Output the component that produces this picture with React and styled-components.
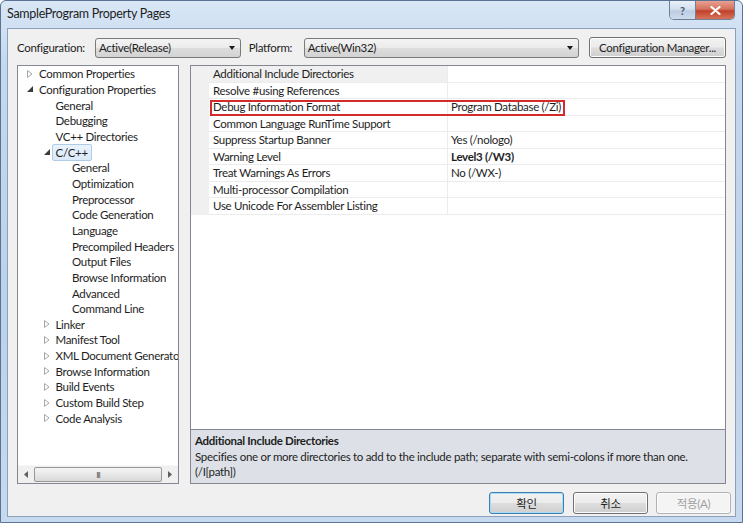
import styled, {createGlobalStyle} from "styled-components";

const GlobalStyle = createGlobalStyle`
  html, body {
    margin: 0;
    padding: 0;
    background: #ffffff;
  }
  body {
    font-family: Lato, "Noto Sans CJK KR", sans-serif;
    font-size: 11.5px;
    letter-spacing: -0.3px;
    color: #000000;
  }
`

const Window = styled.div`
  width: 743px;
  height: 523px;
  box-sizing: border-box;
  display: flex;
  flex-direction: column;
  border: 1px solid #5a7394;
  border-radius: 6px 6px 0 0;
  background: linear-gradient(180deg, #d9e7f6 0%, #c4d8ee 12%, #bcd2ea 60%, #c7d9ee 100%);
  overflow: hidden;
`

const TitleBar = styled.div`
  height: 27px;
  flex-shrink: 0;
  display: flex;
  align-items: flex-start;
  justify-content: space-between;
  padding: 0 7px 0 6px;
`

const Title = styled.div`
  padding-top: 5px;
  font-size: 12.5px;
  color: #1e1e1e;
`

const CaptionButtons = styled.div`
  display: flex;
  border: 1px solid #6f7f95;
  border-top: none;
  border-radius: 0 0 5px 5px;
  overflow: hidden;
  height: 18px;
`

const CaptionButton = styled.div`
  width: ${p => p.$w}px;
  display: flex;
  align-items: center;
  justify-content: center;
  background: ${p => p.$close
    ? "linear-gradient(180deg, #e8a192 0%, #d4715f 45%, #c2412a 55%, #d6735b 100%)"
    : "linear-gradient(180deg, #e9f0f8 0%, #d3e0ee 45%, #bccde2 55%, #cfdcec 100%)"};
  border-left: ${p => p.$close ? "1px solid #6f7f95" : "none"};
  color: ${p => p.$close ? "#ffffff" : "#4a5a70"};
  font-size: 11px;
  font-weight: bold;
`

const Client = styled.div`
  flex: 1;
  margin: 0 6px 5px 6px;
  border: 1px solid #8aa0bc;
  background: #f0f0f0;
  display: flex;
  flex-direction: column;
  padding: 8px 9px 0 9px;
  min-height: 0;
`

const TopRow = styled.div`
  display: flex;
  align-items: center;
  height: 21px;
`

const Label = styled.span`
  margin-left: ${p => p.$ml || 0}px;
  width: ${p => p.$w}px;
  flex-shrink: 0;
  color: #1e1e1e;
`

const Combo = styled.div`
  width: ${p => p.$w}px;
  height: 20px;
  box-sizing: border-box;
  border: 1px solid #7a7a7a;
  border-radius: 3px;
  background: linear-gradient(180deg, #f4f4f4 0%, #ebebeb 48%, #dddddd 52%, #d3d3d3 100%);
  display: flex;
  align-items: center;
  justify-content: space-between;
  padding: 0 5px 0 2px;
  color: #1e1e1e;
`

const ComboText = styled.span`
  padding-left: 1px;
`

const Arrow = styled.span`
  width: 0;
  height: 0;
  border-left: 3.5px solid transparent;
  border-right: 3.5px solid transparent;
  border-top: 4px solid #1a1a1a;
`

const PushButton = styled.div`
  width: ${p => p.$w}px;
  height: ${p => p.$h || 22}px;
  margin-left: ${p => p.$ml || 0}px;
  box-sizing: border-box;
  border: 1px solid ${p => p.$focused ? "#3c7fb1" : p.$disabled ? "#adb2b5" : "#707070"};
  border-radius: 3px;
  background: ${p => p.$disabled
    ? "#f4f4f4"
    : "linear-gradient(180deg, #f2f2f2 0%, #ebebeb 48%, #dddddd 52%, #cfcfcf 100%)"};
  box-shadow: ${p => p.$focused ? "inset 0 0 0 1px #a8dcf5" : "inset 0 0 0 1px #fcfcfc"};
  display: flex;
  align-items: center;
  justify-content: center;
  color: ${p => p.$disabled ? "#a0a0a0" : "#1e1e1e"};
  flex-shrink: 0;
  white-space: nowrap;
`

const Panels = styled.div`
  display: flex;
  gap: 11px;
  margin-top: 7px;
  height: 419px;
`

const TreePanel = styled.div`
  width: 162px;
  box-sizing: border-box;
  border: 1px solid #828790;
  background: #ffffff;
  display: flex;
  flex-direction: column;
`

const TreeList = styled.div`
  flex: 1;
  overflow: hidden;
`

const TreeRow = styled.div`
  height: 15.67px;
  display: flex;
  align-items: center;
  padding-left: ${p => 6 + p.$level * 16.5}px;
  white-space: nowrap;
`

const Expander = styled.span`
  width: 12px;
  height: 12px;
  flex-shrink: 0;
  display: flex;
  align-items: center;
  justify-content: center;
`

const TreeLabel = styled.span`
  padding: 0 3px;
  line-height: 15px;
  border: 1px solid ${p => p.$selected ? "#aecbe8" : "transparent"};
  border-radius: 2px;
  margin-left: -1px;
  background: ${p => p.$selected ? "linear-gradient(180deg, #eaf3fc 0%, #dbe9f8 100%)" : "transparent"};
  color: #1e1e1e;
`

const HScroll = styled.div`
  height: 17px;
  flex-shrink: 0;
  display: flex;
  align-items: center;
  background: #f0f0f0;
  border-top: 1px solid #f7f7f7;
`

const ScrollArrow = styled.span`
  width: 16px;
  height: 17px;
  display: flex;
  align-items: center;
  justify-content: center;
`

const Thumb = styled.div`
  flex: 1;
  height: 15px;
  box-sizing: border-box;
  border: 1px solid #979797;
  border-radius: 2px;
  background: linear-gradient(180deg, #f4f4f4 0%, #e8e8e8 50%, #d8d8d8 100%);
  display: flex;
  align-items: center;
  justify-content: center;
  font-size: 8px;
  color: #606060;
  letter-spacing: -1px;
`

const RightPanel = styled.div`
  flex: 1;
  display: flex;
  flex-direction: column;
`

const Grid = styled.div`
  flex: 1;
  border: 1px solid #828790;
  border-bottom: none;
  background: #ffffff;
`

const GridRow = styled.div`
  position: relative;
  display: flex;
  height: 16.5px;
`

const Gutter = styled.div`
  width: 18px;
  flex-shrink: 0;
  background: #f0f0f0;
`

const NameCell = styled.div`
  width: 239px;
  flex-shrink: 0;
  box-sizing: border-box;
  padding-left: 4px;
  display: flex;
  align-items: center;
  border-bottom: 1px solid #ececec;
  border-right: 1px solid #ececec;
  background: ${p => p.$active ? "#f0f0f0" : "#ffffff"};
  color: #1e1e1e;
  white-space: nowrap;
`

const ValueCell = styled.div`
  flex: 1;
  padding-left: 3px;
  display: flex;
  align-items: center;
  border-bottom: 1px solid #ececec;
  font-weight: ${p => p.$bold ? "bold" : "normal"};
  color: #1e1e1e;
  white-space: nowrap;
`

const Marker = styled.div`
  position: absolute;
  left: 19px;
  top: 0.5px;
  width: 355px;
  height: 16px;
  box-sizing: border-box;
  border: 2px solid #d42a2a;
`

const Description = styled.div`
  height: 55px;
  box-sizing: border-box;
  border: 1px solid #828790;
  background: #dde1e7;
  padding: 3px 4px 0 4px;
  line-height: 15.5px;
  color: #1e1e1e;
`

const DescTitle = styled.div`
  font-weight: bold;
`

const ButtonRow = styled.div`
  display: flex;
  justify-content: flex-end;
  margin-top: 8px;
  margin-right: -5px;
`

const tree = [
  {label: "Common Properties", level: 0, exp: "closed"},
  {label: "Configuration Properties", level: 0, exp: "open"},
  {label: "General", level: 1},
  {label: "Debugging", level: 1},
  {label: "VC++ Directories", level: 1},
  {label: "C/C++", level: 1, exp: "open", selected: true},
  {label: "General", level: 2},
  {label: "Optimization", level: 2},
  {label: "Preprocessor", level: 2},
  {label: "Code Generation", level: 2},
  {label: "Language", level: 2},
  {label: "Precompiled Headers", level: 2},
  {label: "Output Files", level: 2},
  {label: "Browse Information", level: 2},
  {label: "Advanced", level: 2},
  {label: "Command Line", level: 2},
  {label: "Linker", level: 1, exp: "closed"},
  {label: "Manifest Tool", level: 1, exp: "closed"},
  {label: "XML Document Generator", level: 1, exp: "closed"},
  {label: "Browse Information", level: 1, exp: "closed"},
  {label: "Build Events", level: 1, exp: "closed"},
  {label: "Custom Build Step", level: 1, exp: "closed"},
  {label: "Code Analysis", level: 1, exp: "closed"},
];

const props = [
  {name: "Additional Include Directories", value: "", active: true},
  {name: "Resolve #using References", value: ""},
  {name: "Debug Information Format", value: "Program Database (/Zi)", marked: true},
  {name: "Common Language RunTime Support", value: ""},
  {name: "Suppress Startup Banner", value: "Yes (/nologo)"},
  {name: "Warning Level", value: "Level3 (/W3)", bold: true},
  {name: "Treat Warnings As Errors", value: "No (/WX-)"},
  {name: "Multi-processor Compilation", value: ""},
  {name: "Use Unicode For Assembler Listing", value: ""},
];

const ExpanderIcon = ({type}) => {
  if (type === "closed") {
    return (
      <svg width="6" height="8" viewBox="0 0 6 8">
        <path d="M0.5 0.5 L5 4 L0.5 7.5 Z" fill="#ffffff" stroke="#a6a6a6" strokeWidth="1"/>
      </svg>
    );
  }
  if (type === "open") {
    return (
      <svg width="6" height="6" viewBox="0 0 6 6">
        <path d="M6 0 L6 6 L0 6 Z" fill="#3c3c3c"/>
      </svg>
    );
  }
  return null;
};

const SmallTriangle = ({dir}) => (
  <svg width="4" height="7" viewBox="0 0 4 7">
    <path d={dir === "left" ? "M4 0 L0 3.5 L4 7 Z" : "M0 0 L4 3.5 L0 7 Z"} fill="#606060"/>
  </svg>
);

export default function App() {
  return (
    <>
      <GlobalStyle/>
      <Window>
        <TitleBar>
          <Title>SampleProgram Property Pages</Title>
          <CaptionButtons>
            <CaptionButton $w={25}>?</CaptionButton>
            <CaptionButton $w={38} $close>
              <svg width="11" height="9" viewBox="0 0 11 9">
                <path d="M1.5 1 L9.5 8 M9.5 1 L1.5 8" stroke="#ffffff" strokeWidth="2.2" strokeLinecap="round"/>
              </svg>
            </CaptionButton>
          </CaptionButtons>
        </TitleBar>
        <Client>
          <TopRow>
            <Label $w={78}>Configuration:</Label>
            <Combo $w={146}>
              <ComboText>Active(Release)</ComboText>
              <Arrow/>
            </Combo>
            <Label $ml={8} $w={55}>Platform:</Label>
            <Combo $w={276}>
              <ComboText>Active(Win32)</ComboText>
              <Arrow/>
            </Combo>
            <PushButton $w={137} $h={21} $ml={10}>Configuration Manager...</PushButton>
          </TopRow>
          <Panels>
            <TreePanel>
              <TreeList>
                {tree.map((item, i) => (
                  <TreeRow key={i} $level={item.level}>
                    <Expander><ExpanderIcon type={item.exp}/></Expander>
                    <TreeLabel $selected={item.selected}>{item.label}</TreeLabel>
                  </TreeRow>
                ))}
              </TreeList>
              <HScroll>
                <ScrollArrow><SmallTriangle dir="left"/></ScrollArrow>
                <Thumb>III</Thumb>
                <ScrollArrow><SmallTriangle dir="right"/></ScrollArrow>
              </HScroll>
            </TreePanel>
            <RightPanel>
              <Grid>
                {props.map((p, i) => (
                  <GridRow key={i}>
                    <Gutter/>
                    <NameCell $active={p.active}>{p.name}</NameCell>
                    <ValueCell $bold={p.bold}>{p.value}</ValueCell>
                    {p.marked && <Marker/>}
                  </GridRow>
                ))}
              </Grid>
              <Description>
                <DescTitle>Additional Include Directories</DescTitle>
                <div>Specifies one or more directories to add to the include path; separate with semi-colons if more than one.</div>
                <div>(/I[path])</div>
              </Description>
            </RightPanel>
          </Panels>
          <ButtonRow>
            <PushButton $w={75} $focused>확인</PushButton>
            <PushButton $w={75} $ml={9}>취소</PushButton>
            <PushButton $w={75} $ml={8} $disabled>적용(A)</PushButton>
          </ButtonRow>
        </Client>
      </Window>
    </>
  );
}
